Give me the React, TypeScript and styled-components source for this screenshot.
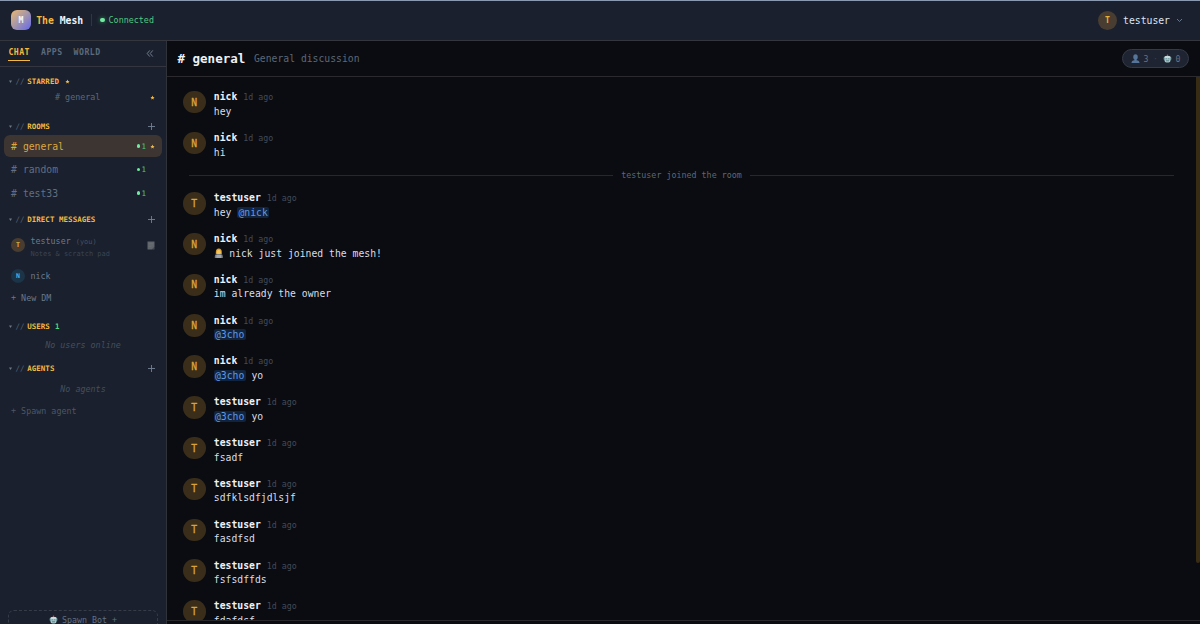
import React from 'react';
import styled, { createGlobalStyle, css } from 'styled-components';

const mono = '"DejaVu Sans Mono", "Liberation Mono", monospace';

const GlobalStyle = createGlobalStyle`
  *, *::before, *::after { box-sizing: border-box; }
  body { margin: 0; background: #0b0c11; overflow: hidden; font-family: ${mono}; }
`;

const Shell = styled.div`
  display: flex;
  flex-direction: column;
  width: 100vw;
  height: 100vh;
  overflow: hidden;
  border-top: 1px solid #8b99b0;
  white-space: nowrap;
`;

const TopBar = styled.header`
  display: flex;
  align-items: center;
  flex: none;
  height: 40px;
  padding: 0 17px 1px 11px;
  background: #1b202e;
  border-bottom: 1px solid #34353d;
`;

const Logo = styled.div`
  display: grid;
  place-items: center;
  width: 20px;
  height: 20px;
  border-radius: 6px;
  background: linear-gradient(135deg, #e9b771 0%, #a496ab 50%, #6468ee 100%);
  color: #f4f5fa;
  font-size: 8.2px;
  font-weight: 700;
`;

const Brand = styled.div`
  margin-left: 5.2px;
  color: #f0f4fa;
  font-size: 9.75px;
  font-weight: 700;
  span { color: #f5b83d; }
`;

const Connection = styled.div`
  display: flex;
  align-items: center;
  gap: 4px;
  height: 12px;
  margin-left: 8px;
  padding-left: 8px;
  border-left: 1px solid #34363f;
  color: #4fc983;
  font-size: 8.4px;
`;

const LiveDot = styled.i<{ $size: number; $glow?: boolean }>`
  flex: none;
  width: ${p => p.$size}px;
  height: ${p => p.$size}px;
  border-radius: 50%;
  background: #72eaa2;
  ${p => p.$glow && css`box-shadow: 0 0 4px #2f9d5c;`}
`;

const Account = styled.div`
  display: flex;
  align-items: center;
  gap: 6px;
  margin-left: auto;
  color: #dfe5ee;
  font-size: 9.75px;
`;

const Avatar = styled.div<{ $size: number; $tone?: 'amber' | 'blue' | 'top'; $font: number }>`
  display: grid;
  place-items: center;
  flex: none;
  width: ${p => p.$size}px;
  height: ${p => p.$size}px;
  border-radius: 50%;
  font-size: ${p => p.$font}px;
  font-weight: ${p => (p.$tone ? 700 : 400)};
  -webkit-text-stroke: ${p => (p.$tone ? 0 : 0.3)}px;
  color: ${p => (p.$tone === 'blue' ? '#4fb4e0' : p.$tone === 'top' ? '#e5b13a' : '#d9a33a')};
  background: ${p => (p.$tone === 'blue' ? '#1b3447' : p.$tone === 'top' ? '#493d31' : '#3a2e1b')};
`;

const Columns = styled.div`
  display: flex;
  flex: 1;
  min-height: 0;
`;

const Sidebar = styled.aside`
  display: flex;
  flex-direction: column;
  flex: none;
  width: 167px;
  background: #1a202d;
  border-right: 1px solid #30323a;
`;

const Tabs = styled.nav`
  display: flex;
  align-items: flex-start;
  gap: 11px;
  flex: none;
  height: 26px;
  padding: 4px 12px 0 8.4px;
  border-bottom: 1px solid #33363f;
  svg { margin: 4px 0 0 auto; }
`;

const Tab = styled.div<{ $active?: boolean }>`
  height: 16px;
  padding-top: 2px;
  line-height: 11px;
  font-size: 8.2px;
  font-weight: 700;
  letter-spacing: 0.47px;
  color: ${p => (p.$active ? '#f5b83d' : '#5b6a7c')};
  border-bottom: 1px solid ${p => (p.$active ? '#f5b83d' : 'transparent')};
`;

const SectionHead = styled.div<{ $top: number }>`
  display: flex;
  align-items: center;
  height: 12px;
  margin-top: ${p => p.$top}px;
  padding: 0 10.5px 0 8px;
  font-size: 7.46px;
  color: #566374;
  b { margin-left: 2.7px; color: #f2b943; font-size: 7.46px; letter-spacing: 0.06px; }
  > svg:last-child:not(:first-child) { margin-left: auto; }
`;

const Slashes = styled.span`
  margin-left: 2.5px;
`;

const Count = styled.strong`
  margin-left: 5px;
  color: #4fd987;
`;

const StarSlot = styled.span`
  display: flex;
  margin-left: 5.5px;
`;

const StarredRow = styled.div`
  display: flex;
  align-items: center;
  justify-content: space-between;
  height: 14px;
  margin-top: 3px;
  padding: 0 11.5px 0 55px;
  font-size: 8.4px;
  color: #5b697b;
`;

const Rooms = styled.div`
  padding-top: 3px;
`;

const RoomRow = styled.div<{ $active?: boolean }>`
  display: flex;
  align-items: center;
  height: 22px;
  margin: 0 4px 1.6px;
  padding: 0 7px;
  border-radius: 6px;
  font-size: 9.75px;
  color: ${p => (p.$active ? '#dba841' : '#616f81')};
  background: ${p => (p.$active ? '#3d3531' : 'transparent')};
`;

const RoomName = styled.span`
  margin-left: 6px;
`;

const Presence = styled.span`
  display: flex;
  align-items: center;
  gap: 1.3px;
  margin-left: auto;
  font-size: 7.5px;
  color: #4fc983;
`;

const RoomStar = styled.span`
  display: flex;
  width: 5px;
  margin-left: 4px;
`;

const DirectRow = styled.div<{ $height: number; $top: number }>`
  display: flex;
  align-items: center;
  gap: 5.5px;
  height: ${p => p.$height}px;
  margin-top: ${p => p.$top}px;
  padding: 0 11px;
  font-size: 8.35px;
  color: #6b7a8d;
  > svg { margin-left: auto; }
`;

const DirectText = styled.div<{ $shift?: number }>`
  line-height: 12px;
  padding-top: ${p => p.$shift ?? 0}px;
  small { display: block; font-size: 6.95px; color: #3a4553; }
  em { font-style: normal; font-size: 6.95px; color: #465261; }
`;

const Action = styled.div<{ $top: number; $dim?: boolean }>`
  height: 12px;
  line-height: 12px;
  margin-top: ${p => p.$top}px;
  padding-left: 11px;
  font-size: 8.4px;
  color: ${p => (p.$dim ? '#4a5767' : '#6a788b')};
`;

const Empty = styled.div<{ $top: number }>`
  height: 12px;
  line-height: 12px;
  margin-top: ${p => p.$top}px;
  text-align: center;
  font-size: 8.4px;
  font-style: italic;
  color: #434f5e;
`;

const SpawnBot = styled.div`
  display: flex;
  justify-content: center;
  gap: 4px;
  flex: none;
  height: 30px;
  margin: auto 8px -16px;
  padding-top: 3px;
  border: 1px dashed #363d49;
  border-radius: 6px;
  font-size: 8.3px;
  line-height: 12px;
  color: #627082;
  svg { margin-top: 1px; }
`;

const Main = styled.main`
  display: flex;
  flex-direction: column;
  flex: 1;
  min-width: 0;
  background: #0b0c11;
`;

const RoomHeader = styled.div`
  display: flex;
  align-items: center;
  flex: none;
  height: 36px;
  padding: 0 11px 0 10.5px;
  border-bottom: 1px solid #2b2a2c;
  h1 { margin: 0; font-size: 12.5px; color: #eef2f8; }
  p { margin: 0 0 0 8.7px; font-size: 9.75px; color: #5b6877; }
`;

const Members = styled.div`
  display: flex;
  align-items: center;
  justify-content: space-between;
  width: 67px;
  height: 19px;
  margin-left: auto;
  padding: 0 7.5px;
  border: 1px solid #353a46;
  border-radius: 10px;
  background: #1e2432;
  color: #667384;
  font-size: 8.2px;
  span { display: flex; align-items: center; gap: 4px; }
  i { font-style: normal; color: #3a424f; }
`;

const Feed = styled.div`
  display: flex;
  flex: 1;
  min-height: 0;
  overflow: hidden;
`;

const Messages = styled.div`
  flex: 1;
  padding: 7.1px 22px 0 16px;
`;

const MessageRow = styled.article`
  display: flex;
  gap: 8.3px;
  height: 40.82px;
  padding-top: 6.9px;
`;

const Body = styled.div`
  color: #d7dee8;
  font-size: 9.75px;
  line-height: 14px;
  header { display: flex; gap: 6px; height: 14.5px; margin-top: -0.8px; align-items: baseline; }
  header b { font-size: 9.75px; color: #eef2f8; }
  time { font-size: 8.3px; color: #414b58; }
  svg { vertical-align: -1px; }
`;

const Mention = styled.span`
  padding: 0 1.2px;
  border-radius: 2px;
  background: #11243f;
  color: #5f98e2;
`;

const SystemLine = styled.div`
  display: flex;
  align-items: center;
  gap: 8px;
  height: 19.4px;
  margin-left: 6px;
  font-size: 8.35px;
  color: #5b6877;
  &::before, &::after { content: ''; flex: 1; height: 1px; background: #28272a; }
`;

const ScrollThumb = styled.div`
  width: 4px;
  height: 486px;
  background: #382c15;
  border-radius: 0 0 2px 2px;
`;

const Composer = styled.div`
  flex: none;
  height: 4px;
  border-top: 1px solid #29282b;
`;

const Caret = () => (
  <svg width="5" height="5" viewBox="0 0 5 5"><path d="M1 1.5h3L2.5 4z" fill="#6d7885" /></svg>
);

const Plus = () => (
  <svg width="9" height="9" viewBox="0 0 9 9" stroke="#748193" strokeWidth="0.9"><path d="M4.5 1v7M1 4.5h7" /></svg>
);

const Star = () => (
  <svg width="5" height="5" viewBox="0 0 10 10">
    <path d="M5 1l1.2 2.8 3 .3-2.3 2 .7 3L5 7.6 2.4 9.1l.7-3-2.3-2 3-.3z" fill="#f2b943" />
  </svg>
);

const Robot = () => (
  <svg width="9" height="9" viewBox="0 0 18 18">
    <circle cx="9" cy="2.5" r="1.7" fill="#a95f5c" />
    <rect x="1" y="6" width="16" height="6" rx="2" fill="#4b8088" />
    <path d="M3 7q0-3 4-3h4q4 0 4 3v6q0 4-4 4H7q-4 0-4-4z" fill="#a3c4c8" />
    <rect x="3" y="4.4" width="12" height="3" rx="1.5" fill="#d5e4e6" />
    <path d="M5.5 9.5h2M10.5 9.5h2M6 13.5h6" stroke="#4b7077" strokeWidth="1.5" />
  </svg>
);

const Bust = () => (
  <svg width="9" height="9" viewBox="0 0 18 18" fill="#55769a">
    <ellipse cx="9" cy="6" rx="4.5" ry="5.5" />
    <path d="M7 10h4v2.5q6 .5 6 5.5H1q0-5 6-5.5z" />
  </svg>
);

const Worker = () => (
  <svg width="9.6" height="10" viewBox="0 0 18 20">
    <path d="M3 8q0-7 6-7t6 7v4H3z" fill="#d99c31" />
    <ellipse cx="9" cy="8.5" rx="4" ry="5" fill="#f3c65b" />
    <path d="M1 20v-4q0-4 5-4h6q5 0 5 4v4z" fill="#777b83" />
    <path d="M4 14h10v6H4z" fill="#a2a5aa" />
  </svg>
);

const Note = () => (
  <svg width="8" height="9" viewBox="0 0 16 18">
    <path d="M1 1h14v11l-5 5H1z" fill="#60656c" />
    <path d="M15 12v5h-5z" fill="#4a4f58" />
    <path d="M3 5h10M3 8h10M3 11h6" stroke="#6e7379" strokeWidth="1" />
  </svg>
);

type Entry = { user: string; text?: string; mention?: string; tail?: string; icon?: boolean };

const before: Entry[] = [{ user: 'nick', text: 'hey' }, { user: 'nick', text: 'hi' }];
const after: Entry[] = [
  { user: 'testuser', text: 'hey ', mention: '@nick' },
  { user: 'nick', icon: true, text: ' nick just joined the mesh!' },
  { user: 'nick', text: 'im already the owner' },
  { user: 'nick', mention: '@3cho' },
  { user: 'nick', mention: '@3cho', tail: ' yo' },
  { user: 'testuser', mention: '@3cho', tail: ' yo' },
  { user: 'testuser', text: 'fsadf' },
  { user: 'testuser', text: 'sdfklsdfjdlsjf' },
  { user: 'testuser', text: 'fasdfsd' },
  { user: 'testuser', text: 'fsfsdffds' },
  { user: 'testuser', text: 'fdafdsf' },
];

const Message = ({ entry }: { entry: Entry }) => (
  <MessageRow>
    <Avatar $size={22.5} $font={9.7}>{entry.user[0].toUpperCase()}</Avatar>
    <Body>
      <header><b>{entry.user}</b><time>1d ago</time></header>
      <div>
        {entry.icon && <Worker />}
        {entry.text}
        {entry.mention && <Mention>{entry.mention}</Mention>}
        {entry.tail}
      </div>
    </Body>
  </MessageRow>
);

const Section = ({ title, top, plus, children }: { title: string; top: number; plus?: boolean; children?: React.ReactNode }) => (
  <SectionHead $top={top}>
    <Caret /><Slashes>//</Slashes><b>{title}</b>{children}{plus && <Plus />}
  </SectionHead>
);

const Room = ({ name, active }: { name: string; active?: boolean }) => (
  <RoomRow $active={active}>
    #<RoomName>{name}</RoomName>
    <Presence><LiveDot $size={3.4} />1</Presence>
    <RoomStar>{active && <Star />}</RoomStar>
  </RoomRow>
);

export default function App() {
  return (
    <>
      <GlobalStyle />
      <Shell>
        <TopBar>
          <Logo>M</Logo>
          <Brand><span>The</span> Mesh</Brand>
          <Connection><LiveDot $size={4.4} $glow />Connected</Connection>
          <Account>
            <Avatar $size={19} $font={8.2} $tone="top">T</Avatar>
            <span>testuser</span>
            <svg width="7" height="5" viewBox="0 0 7 5" fill="none" stroke="#718094" strokeWidth="0.9"><path d="M1 1l2.5 2.5L6 1" /></svg>
          </Account>
        </TopBar>
        <Columns>
          <Sidebar>
            <Tabs>
              <Tab $active>CHAT</Tab>
              <Tab>APPS</Tab>
              <Tab>WORLD</Tab>
              <svg width="8" height="9" viewBox="0 0 8 9" fill="none" stroke="#7b8798" strokeWidth="0.9"><path d="M3.8 1.4L1.2 4.5l2.6 3.1M6.8 1.4L4.2 4.5l2.6 3.1" /></svg>
            </Tabs>
            <Section title="STARRED" top={8}><StarSlot><Star /></StarSlot></Section>
            <StarredRow># general<Star /></StarredRow>
            <Section title="ROOMS" top={16} plus />
            <Rooms>
              <Room name="general" active />
              <Room name="random" />
              <Room name="test33" />
            </Rooms>
            <Section title="DIRECT MESSAGES" top={7.5} plus />
            <DirectRow $height={26} $top={7.2}>
              <Avatar $size={14} $font={6.5} $tone="top">T</Avatar>
              <DirectText $shift={4}>testuser <em>(you)</em><small>Notes &amp; scratch pad</small></DirectText>
              <Note />
            </DirectRow>
            <DirectRow $height={16} $top={9.2}>
              <Avatar $size={14} $font={6.5} $tone="blue">N</Avatar>
              <DirectText>nick</DirectText>
            </DirectRow>
            <Action $top={8}>+ New DM</Action>
            <Section title="USERS" top={17.2}><Count>1</Count></Section>
            <Empty $top={5.7}>No users online</Empty>
            <Section title="AGENTS" top={12.3} plus />
            <Empty $top={7.8}>No agents</Empty>
            <Action $top={10.3} $dim>+ Spawn agent</Action>
            <SpawnBot><Robot />Spawn Bot +</SpawnBot>
          </Sidebar>
          <Main>
            <RoomHeader>
              <h1># general</h1>
              <p>General discussion</p>
              <Members><span><Bust />3</span><i>·</i><span><Robot />0</span></Members>
            </RoomHeader>
            <Feed>
              <Messages>
                {before.map((m, i) => <Message key={i} entry={m} />)}
                <SystemLine>testuser joined the room</SystemLine>
                {after.map((m, i) => <Message key={i} entry={m} />)}
              </Messages>
              <ScrollThumb />
            </Feed>
            <Composer />
          </Main>
        </Columns>
      </Shell>
    </>
  );
}
